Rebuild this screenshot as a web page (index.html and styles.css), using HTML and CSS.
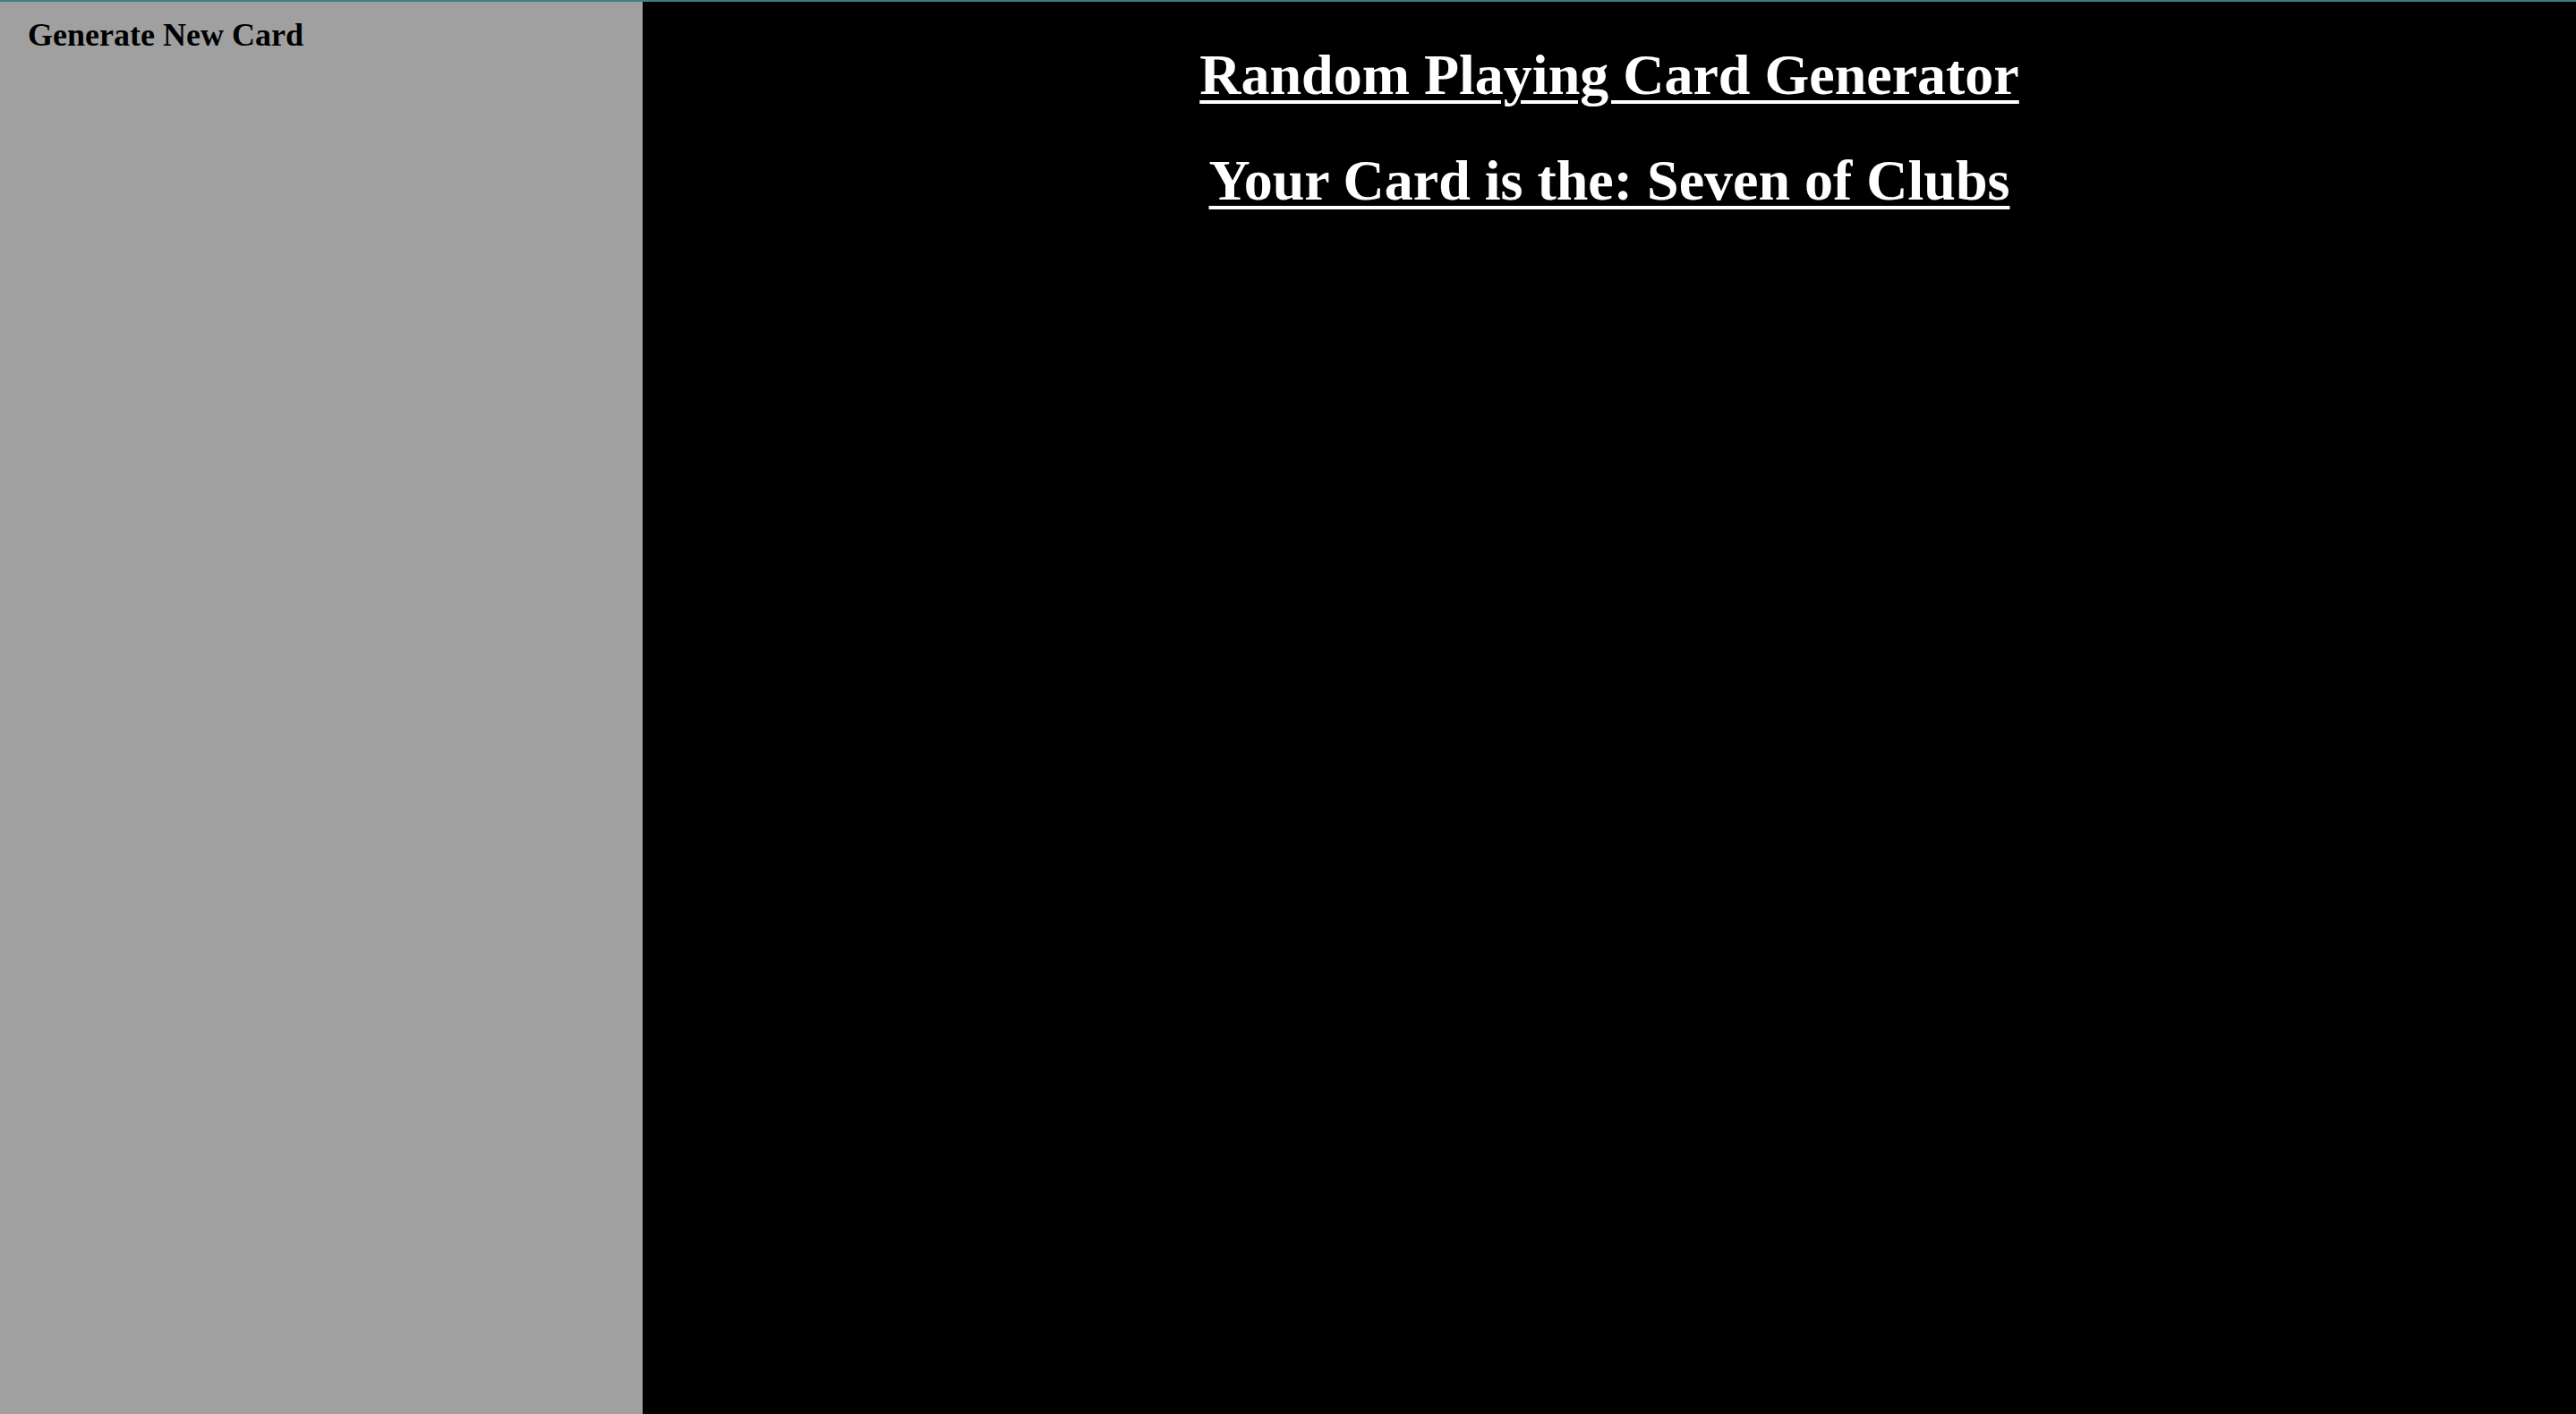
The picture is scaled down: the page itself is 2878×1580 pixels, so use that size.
FILE: index.html
```html
<!DOCTYPE html>
<html>
<head>
<meta charset="utf-8">
<title>Random Playing Card Generator</title>
<link rel="stylesheet" href="styles.css">
</head>
<body>
<div class="page">
  <aside class="sidebar">
    <button class="gen-btn" type="button">Generate New Card</button>
  </aside>
  <main class="main">
    <h1 class="title">Random Playing Card Generator</h1>
    <h1 class="title">Your Card is the: Seven of Clubs</h1>
  </main>
</div>
</body>
</html>
```

FILE: styles.css
```css
html, body {
  margin: 0;
  padding: 0;
  height: 100%;
}
body {
  font-family: "Times New Roman", "Liberation Serif", serif;
  background: #000;
}
.page {
  display: grid;
  grid-template-columns: 718px 1fr;
  height: 1580px;
  box-sizing: border-box;
  border-top: 2px solid #3e7e89;
}
.sidebar {
  background: #a0a0a0;
  padding: 16px 0 0 31px;
}
.gen-btn {
  font-family: "Times New Roman", "Liberation Serif", serif;
  font-weight: bold;
  font-size: 36px;
  color: #000;
  background: transparent;
  border: 0;
  padding: 0;
  margin: 0;
  line-height: normal;
  cursor: pointer;
}
.main {
  background: #000;
  color: #fff;
  text-align: center;
  padding-top: 2px;
}
.title {
  font-size: 64px;
  font-weight: bold;
  margin: 43px 0 44px;
  text-decoration: underline;
  text-decoration-thickness: 4px;
  text-underline-offset: 7px;
}
.title + .title {
  margin-top: 0;
}
```
